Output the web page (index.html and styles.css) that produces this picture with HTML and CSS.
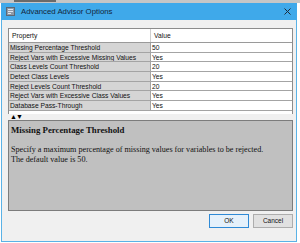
FILE: index.html
```html
<!DOCTYPE html>
<html>

<head>
  <title>Advanced Advisor Options</title>
  <link rel="stylesheet" href="styles.css">
</head>

<body>
  <div class="behind">
    <span class="behind-mark"></span>
  </div>
  <div class="window">
    <div class="titlebar">
      <svg class="app-icon" width="9" height="9" viewBox="0 0 9 9">
        <rect x="0.5" y="0.5" width="8" height="8" fill="#8e9aa8" stroke="#5d6874" />
        <rect x="2" y="2" width="5" height="1" fill="#dfe6ee" />
        <rect x="2" y="4" width="5" height="1" fill="#dfe6ee" />
        <rect x="2" y="6" width="3" height="1" fill="#dfe6ee" />
      </svg>
      <div class="title">Advanced Advisor Options</div>
      <svg class="close" width="7" height="7" viewBox="0 0 7 7">
        <path d="M0.5 0.5 L6.5 6.5 M6.5 0.5 L0.5 6.5" stroke="#1d2b3a" stroke-width="1" />
      </svg>
    </div>
    <div class="dialog-body">
      <div class="grid">
        <div class="grid-head">
          <div class="cell prop">Property</div>
          <div class="cell value">Value</div>
        </div>
        <div class="grid-row">
          <div class="cell prop">Missing Percentage Threshold</div>
          <div class="cell value">50</div>
        </div>
        <div class="grid-row">
          <div class="cell prop">Reject Vars with Excessive Missing Values</div>
          <div class="cell value">Yes</div>
        </div>
        <div class="grid-row">
          <div class="cell prop">Class Levels Count Threshold</div>
          <div class="cell value">20</div>
        </div>
        <div class="grid-row">
          <div class="cell prop">Detect Class Levels</div>
          <div class="cell value">Yes</div>
        </div>
        <div class="grid-row">
          <div class="cell prop">Reject Levels Count Threshold</div>
          <div class="cell value">20</div>
        </div>
        <div class="grid-row">
          <div class="cell prop">Reject Vars with Excessive Class Values</div>
          <div class="cell value">Yes</div>
        </div>
        <div class="grid-row">
          <div class="cell prop">Database Pass-Through</div>
          <div class="cell value">Yes</div>
        </div>
      </div>
      <div class="splitter">&#9650;&#9660;</div>
      <div class="description">
        <div class="desc-title">Missing Percentage Threshold</div>
        <p class="desc-text">Specify a maximum percentage of missing values for variables to be rejected.<br>The default value is 50.</p>
      </div>
      <div class="buttons">
        <button class="btn btn-default">OK</button>
        <button class="btn">Cancel</button>
      </div>
    </div>
  </div>
</body>

</html>
```

FILE: styles.css
```css
body {
  margin: 0;
  width: 300px;
  height: 243px;
  overflow: hidden;
  background-color: #ffffff;
  font-family: "Liberation Sans", Arial, sans-serif;
}

.behind {
  height: 3px;
  display: flex;
  padding-left: 14px;
  background-color: #c6c6c6;
}

.behind-mark {
  width: 42px;
  height: 2px;
  background-color: #6a6a6a;
}

.window {
  margin-left: 1px;
  width: 296px;
}

.titlebar {
  height: 17px;
  display: flex;
  align-items: center;
  padding: 0 6px 0 5px;
  background-color: #3fa9ea;
}

.app-icon {
  margin-right: 6px;
}

.title {
  flex: 1;
  font-size: 7.8px;
  color: #14263a;
}

.dialog-body {
  box-sizing: border-box;
  height: 222px;
  padding: 8px 3px 0 6px;
  border: 1px solid #5ab2e6;
  border-top: none;
  background-color: #f0f0f0;
}

.grid {
  border: 1px solid #8c8c8c;
  border-bottom: none;
  background-color: #ffffff;
  padding-bottom: 3px;
  font-size: 6.7px;
  color: #111111;
}

.grid-head,
.grid-row {
  display: grid;
  grid-template-columns: 141px 1fr;
}

.grid-head {
  height: 13px;
  border-bottom: 1px solid #9a9a9a;
}

.grid-head .cell {
  line-height: 13px;
  padding-left: 3px;
}

.grid-head .value {
  border-left: 1px solid #d0d0d0;
}

.grid-row {
  height: 9.7px;
}

.cell {
  overflow: hidden;
  white-space: nowrap;
}

.grid-row .cell {
  box-sizing: border-box;
  line-height: 9px;
  border-bottom: 1px solid #a4a4a4;
}

.grid-row .prop {
  background-color: #d5d5d5;
  padding-left: 1px;
}

.grid-row .value {
  border-left: 1px solid #a4a4a4;
  padding-left: 1px;
}

.splitter {
  height: 6px;
  padding-left: 2px;
  font-size: 7px;
  line-height: 6px;
  letter-spacing: -1px;
  color: #000000;
}

.description {
  box-sizing: border-box;
  height: 91px;
  padding: 4px 2px 0 2px;
  border: 1px solid #7c7c7c;
  background-color: #c0c0c0;
  font-family: "Liberation Serif", "Times New Roman", serif;
  color: #111111;
}

.desc-title {
  font-size: 8.8px;
  font-weight: bold;
}

.desc-text {
  margin: 10px 0 0 0;
  font-size: 8.15px;
  line-height: 10.5px;
}

.buttons {
  display: flex;
  justify-content: flex-end;
  gap: 4px;
  margin-top: 3px;
}

.btn {
  width: 40px;
  height: 14px;
  padding: 0;
  border: 1px solid #adadad;
  background-color: #e1e1e1;
  font-family: "Liberation Sans", Arial, sans-serif;
  font-size: 6.5px;
  color: #111111;
}

.btn-default {
  border-color: #2f8ad6;
  background-color: #e5f1fb;
}
```
